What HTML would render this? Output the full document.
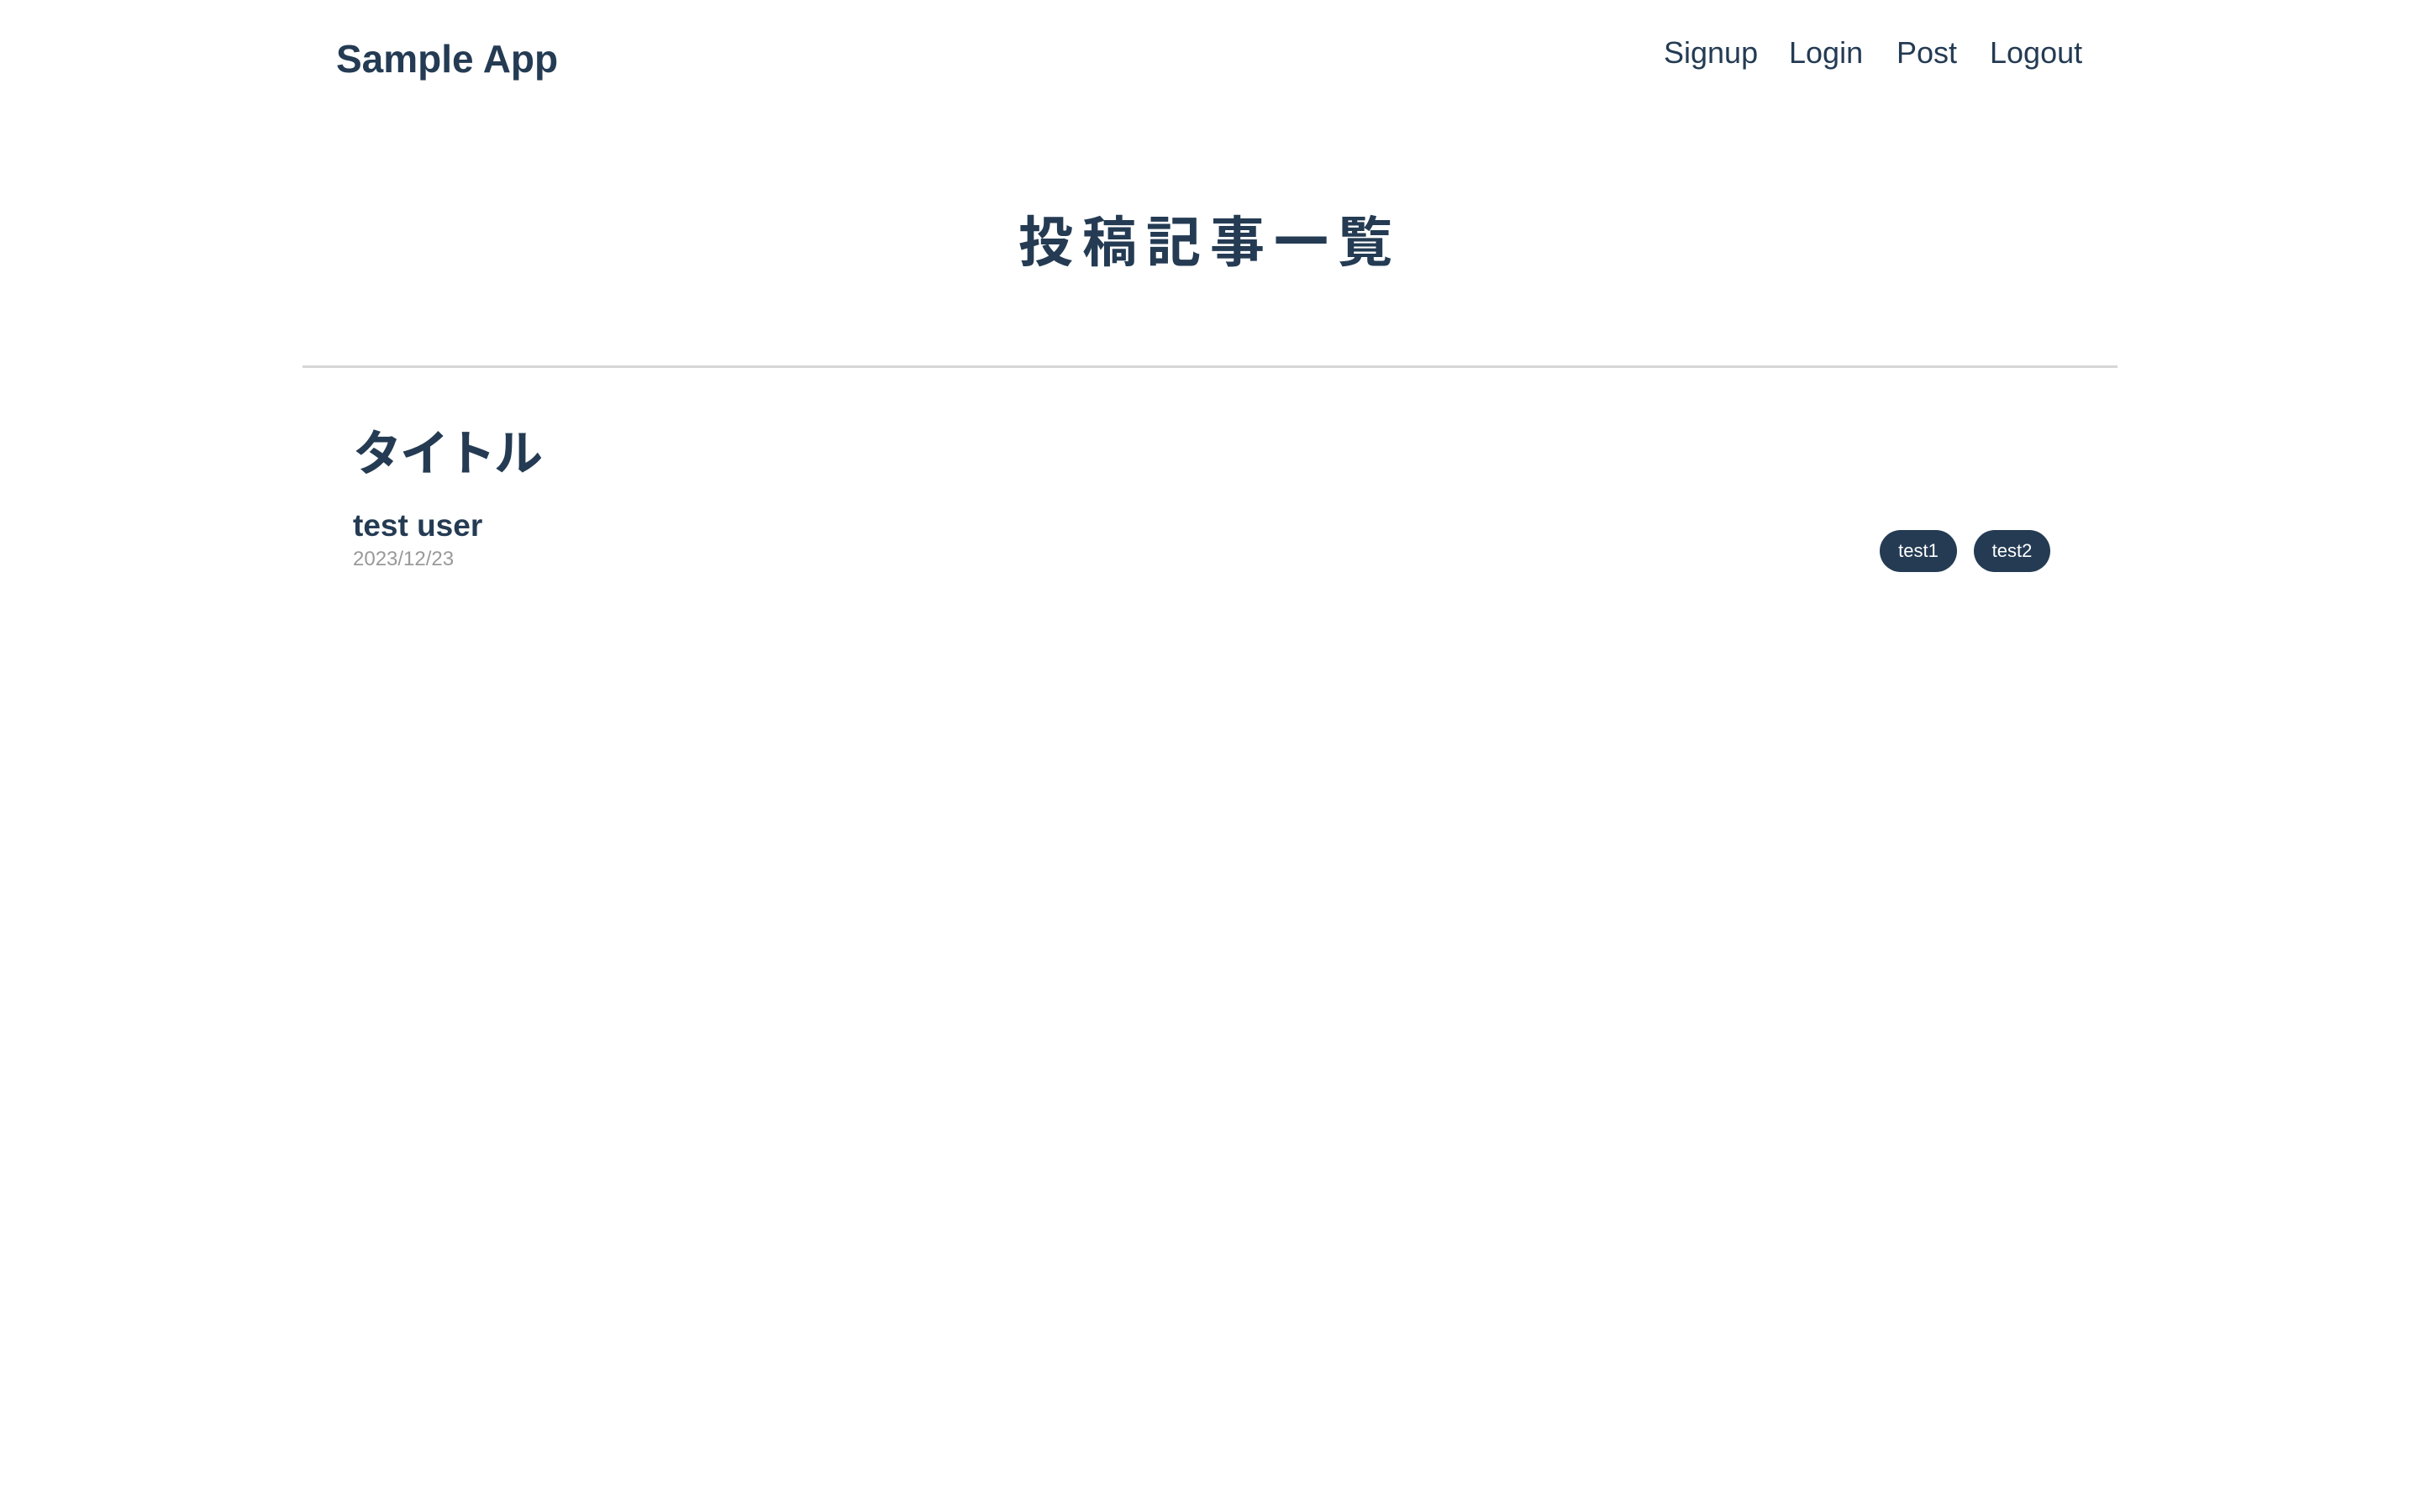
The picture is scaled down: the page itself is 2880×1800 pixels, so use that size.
<!DOCTYPE html>
<html><head><meta charset="utf-8"><style>
body{margin:0;width:2880px;height:1800px;background:#fff;color:#243b53;font-family:"Liberation Sans","Noto Sans CJK JP",sans-serif;position:relative;overflow:hidden}
.a{position:absolute;white-space:nowrap}
.logo{left:400px;top:40px;font-size:46px;font-weight:bold;line-height:60px}
.nav{top:38px;font-size:36px;line-height:50px}
h1{position:absolute;left:0;width:2880px;text-align:center;top:245px;margin:0;font-size:65px;letter-spacing:11px;line-height:88px;font-weight:bold;padding-left:0;box-sizing:border-box}
.hr{position:absolute;left:360px;width:2160px;top:435px;height:3px;background:#d6d6d6}
.t{left:420px;top:503px;font-size:58px;font-weight:bold;line-height:76px;letter-spacing:-2px}
.u{left:420px;top:602px;font-size:37px;font-weight:bold;line-height:48px}
.d{left:420px;top:652px;font-size:24px;color:#999;line-height:28px}
.tag{top:631px;height:50px;line-height:50px;background:#243b53;color:#fff;font-size:22px;border-radius:25px;text-align:center}
</style></head><body>
<div class="a logo">Sample App</div>
<div class="a nav" style="left:1980px">Signup</div>
<div class="a nav" style="left:2129px">Login</div>
<div class="a nav" style="left:2257px">Post</div>
<div class="a nav" style="left:2368px">Logout</div>
<h1>投稿記事一覧</h1>
<div class="hr"></div>
<div class="a t">タイトル</div>
<div class="a u">test user</div>
<div class="a d">2023/12/23</div>
<div class="a tag" style="left:2237px;width:92px">test1</div>
<div class="a tag" style="left:2349px;width:91px">test2</div>
</body></html>
